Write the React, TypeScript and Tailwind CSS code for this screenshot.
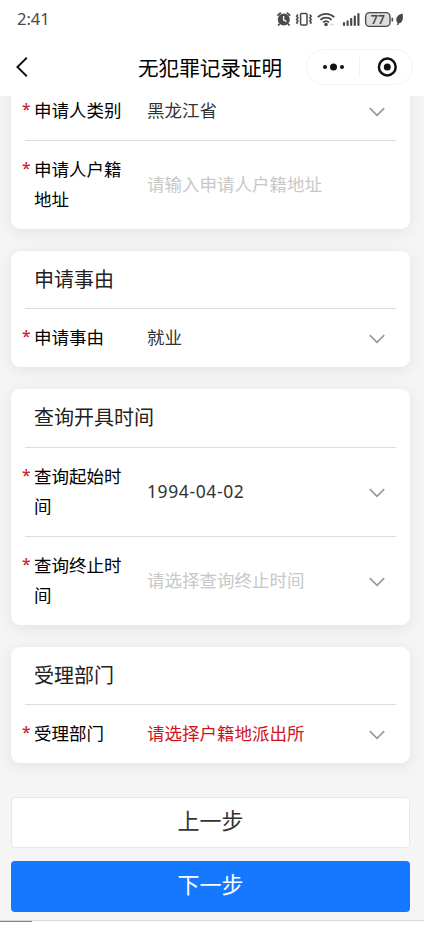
import type { ReactNode } from 'react';

type FieldProps = {
   label: string;
   value: string;
   tone?: 'normal' | 'placeholder' | 'error';
   arrow?: boolean;
};

const tones = {
   normal: 'text-[#333]',
   placeholder: 'text-[#c8c8c8]',
   error: 'text-[#d0141c]',
};

function Field({ label, value, tone = 'normal', arrow = true }: FieldProps) {
   return (
      <div className="flex items-center pt-[13px] pb-[15px] pl-[11px] pr-[25px]">
         <span className="w-[12px] self-start text-[15.5px] font-medium leading-[29px] text-[#d0202f]">*</span>
         <span className="w-[90px] text-[17.5px] leading-[30px] text-black">{label}</span>
         <span
            className={`ml-[23px] flex-1 text-[17.5px] leading-[30px] ${/^\d/.test(value) ? 'tracking-[0.6px]' : ''} ${tones[tone]}`}
         >
            {value}
         </span>
         {arrow && (
            <svg className="mt-[4px] h-[10px] w-[16px]" viewBox="0 0 16 10" fill="none" stroke="#999" strokeWidth="1.7">
               <path d="M0.8 1.2 8 8.3l7.2-7.1" />
            </svg>
         )}
      </div>
   );
}

function Divider() {
   return <div className="ml-[14px] mr-[14px] h-px bg-[#dcdcdc]" />;
}

function Card({ title, children }: { title?: string; children: ReactNode }) {
   return (
      <section className="rounded-[9px] bg-white shadow-[0_3px_16px_rgba(0,0,0,0.08)]">
         {title && (
            <>
               <h2 className="h-[57.3px] pl-[23px] text-[20px] leading-[57px] text-[#222]">{title}</h2>
               <Divider />
            </>
         )}
         {children}
      </section>
   );
}

function StatusBar() {
   return (
      <div className="flex h-[38px] items-center justify-between pl-[17px] pr-[20px] text-[#4a4a4a]">
         <span className="text-[16.5px] leading-none">2:41</span>
         <svg className="h-[18px] w-[128px]" viewBox="0 0 128 18" fill="none" stroke="#4a4a4a">
            {/* alarm */}
            <circle cx="7.8" cy="9.5" r="6" fill="#4a4a4a" stroke="none" />
            <path d="M1.4 5.6 4.8 2.6M14.2 5.6l-3.4-3M3.6 13.8l-1.6 1.7M12 13.8l1.6 1.7" strokeWidth="1.7" />
            <path d="M7.6 6v3.8l2.8 1.8" stroke="#fff" strokeWidth="1.3" />
            {/* vibrate */}
            <rect x="24.6" y="3.4" width="6.4" height="11.6" rx="1" strokeWidth="1.5" />
            <path d="M22 4.6l-1.4 1.6L22 7.8l-1.4 1.6L22 11l-1.4 1.6 1 1.2M33.8 4.6l1.4 1.6-1.4 1.6 1.4 1.6-1.4 1.6 1.4 1.6-1 1.2" strokeWidth="1.5" />
            {/* wifi */}
            <path d="M41.8 7.2a11.9 11.9 0 0 1 16.4 0M44.4 9.9a8.2 8.2 0 0 1 11.2 0M47 12.4a4.6 4.6 0 0 1 6 0" strokeWidth="1.8" />
            <circle cx="50" cy="14.5" r="1.8" fill="#4a4a4a" stroke="none" />
            <path d="M54 14.5h4" stroke="#ddd" strokeWidth="1.5" />
            {/* signal */}
            <path d="M68 13.2V15M71.6 11.4V15M75.2 9.2V15M78.8 6.6V15M82.4 4V15" strokeWidth="2.2" strokeLinecap="round" />
            {/* battery */}
            <rect x="89.6" y="2.6" width="24.4" height="13.8" rx="4" fill="#dedede" strokeWidth="1.4" />
            <path d="M116.3 7.8v3.6" strokeWidth="1.6" />
            <text x="101.8" y="14" textAnchor="middle" fontSize="12.5" fontWeight="600" fill="#4a4a4a" stroke="none">
               77
            </text>
            <path d="M126.6 3.4c-4.4 1-6.8 4-6.3 7.2.2 1 .7 1.8 1.3 2.3l-.7 2.2 1.4-.2.8-1.6c3.2-.6 4.5-4.3 3.5-9.9z" fill="#4a4a4a" stroke="none" />
         </svg>
      </div>
   );
}

function NavBar() {
   return (
      <div className="grid h-[58px] grid-cols-[138px_1fr_107px] items-center pr-[11px]">
         <svg className="ml-[16px] h-[20px] w-[12px]" viewBox="0 0 12 20" fill="none" stroke="#111" strokeWidth="1.9">
            <path d="M10.8 0.8 1.4 10l9.4 9.2" />
         </svg>
         <h1 className="mt-[2px] whitespace-nowrap text-[20.6px] leading-[30px] text-black">无犯罪记录证明</h1>
         <div className="flex h-[36px] items-center rounded-full border border-[#f3f3f3]">
            <svg className="h-[20px] w-full" viewBox="0 0 105 20">
               <circle cx="18" cy="10" r="2" fill="#111" />
               <circle cx="26.5" cy="10" r="3.5" fill="#111" />
               <circle cx="35" cy="10" r="2" fill="#111" />
               <path d="M52.5 0v20" stroke="#f3f3f3" />
               <circle cx="80.3" cy="10" r="8.4" fill="none" stroke="#111" strokeWidth="2.5" />
               <circle cx="80.3" cy="10" r="3.5" fill="#111" />
            </svg>
         </div>
      </div>
   );
}

export default function App() {
   return (
      <div className="flex h-[925px] w-[424px] flex-col overflow-hidden bg-[#f5f5f5] font-['Noto_Sans','Noto_Sans_CJK_SC',sans-serif]">
         <header className="z-10 h-[96px] shrink-0 bg-white">
            <StatusBar />
            <NavBar />
         </header>

         <main className="-mt-[14px] flex flex-col gap-[22px] pl-[11px] pr-[14px]">
            <Card>
               <Field label="申请人类别" value="黑龙江省" />
               <Divider />
               <Field label="申请人户籍地址" value="请输入申请人户籍地址" tone="placeholder" arrow={false} />
            </Card>
            <Card title="申请事由">
               <Field label="申请事由" value="就业" />
            </Card>
            <Card title="查询开具时间">
               <Field label="查询起始时间" value="1994-04-02" />
               <Divider />
               <Field label="查询终止时间" value="请选择查询终止时间" tone="placeholder" />
            </Card>
            <Card title="受理部门">
               <Field label="受理部门" value="请选择户籍地派出所" tone="error" />
            </Card>
         </main>

         {/* Actions */}
         <div className="mt-[34.1px] flex flex-col gap-[13px] pl-[11px] pr-[14px]">
            <button className="h-[51px] rounded-[4px] border border-[#e8e8e8] bg-white pb-[5px] text-[22px] leading-none text-[#333]">上一步</button>
            <button className="h-[51px] rounded-[4px] bg-[#1677ff] pb-[5px] text-[22px] leading-none text-white">下一步</button>
         </div>

         <div className="mt-[8px] flex-1 border-t border-[#d9d9d9] bg-white">
            <div className="h-px w-[32px] bg-[#1dbf60]" />
         </div>
      </div>
   );
}
